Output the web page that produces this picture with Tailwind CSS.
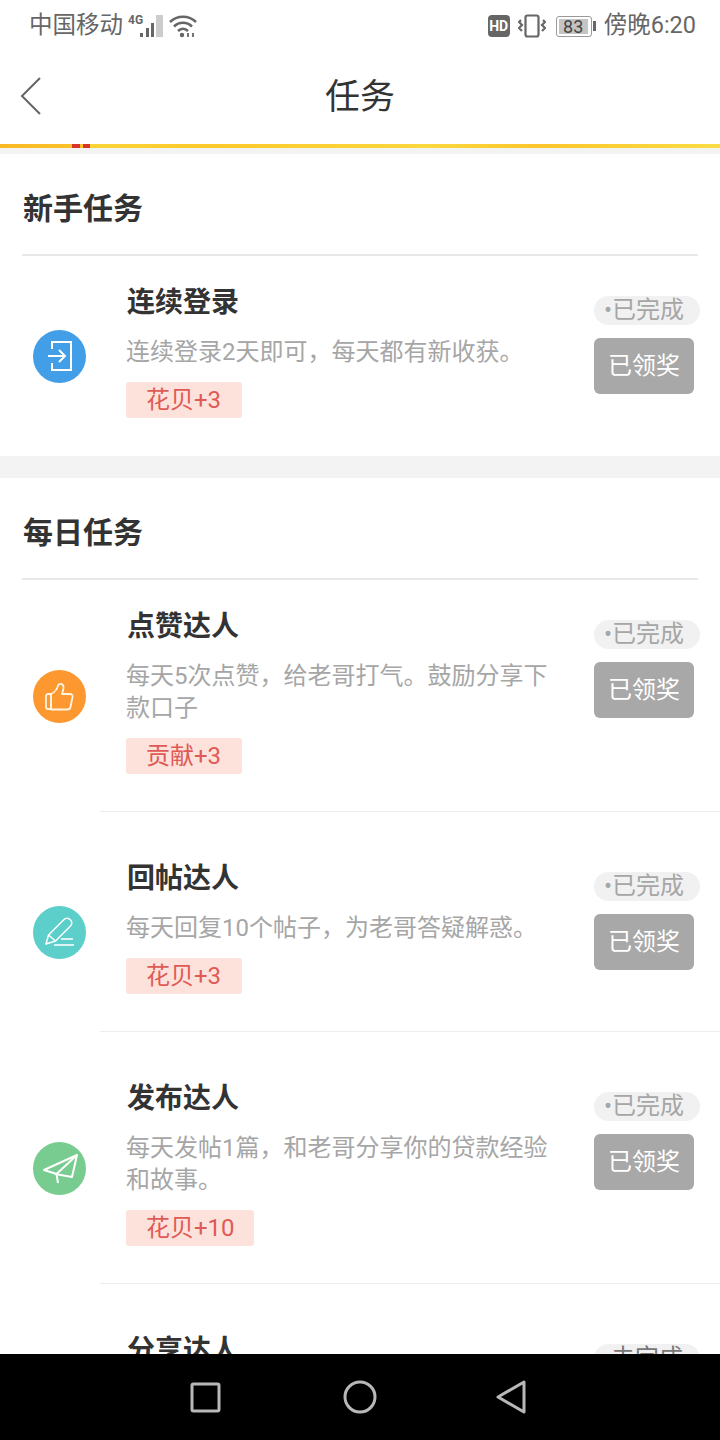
<!DOCTYPE html>
<html lang="zh-CN">
<head>
  <meta charset="UTF-8" />
  <meta name="viewport" content="width=device-width, initial-scale=1.0"/>
  <title>任务</title>
  <script src="https://cdn.jsdelivr.net/npm/@tailwindcss/browser@4"></script>
</head>
<body class="bg-white font-['Roboto','Noto_Sans_CJK_SC',sans-serif]">
<div class="w-[720px] h-[1440px] flex flex-col overflow-hidden">

  <!-- Status bar -->
  <div class="h-[50px] shrink-0 flex items-center justify-between pt-[2px] pl-[29px] pr-[24px] text-[#666] text-[23.5px]">
    <div class="flex items-center">
      <span>中国移动</span>
      <svg class="ml-[5px]" width="36" height="24" viewBox="0 0 36 24" fill="#666">
        <text x="0" y="10" font-size="12" font-weight="700" font-family="Roboto">4G</text>
        <rect x="12" y="19" width="3" height="4"/>
        <rect x="18" y="14" width="3" height="9"/>
        <rect x="23" y="9" width="3" height="14"/>
        <rect x="28" y="1" width="7" height="22" fill="#ccc"/>
      </svg>
      <svg class="ml-[5px]" width="28" height="24" viewBox="0 0 28 24" fill="none" stroke="#666" stroke-width="2.600">
        <path d="M1 8C8 1 20 1 27 8"/>
        <path d="M5 12.500C10 7.500 18 7.500 23 12.500"/>
        <path d="M9 17C12 14 16 14 19 17"/>
        <circle cx="13" cy="21" r="2.200" fill="#666" stroke="none"/>
        <path d="M19 19v4M24 19v4" stroke-width="1.800"/>
      </svg>
    </div>
    <div class="flex items-center">
      <div class="w-[22px] h-[22px] rounded-[4px] bg-[#666] text-white text-[14px] leading-[22px] font-bold text-center">HD</div>
      <svg class="ml-[8px]" width="28" height="24" viewBox="0 0 28 24" fill="none" stroke="#666" stroke-width="2.200">
        <rect x="7.500" y="1.500" width="13" height="21" rx="2"/>
        <path d="M3 6l-2 2 3 3-3 3 3 3M25 6l2 2-3 3 3 3-3 3"/>
      </svg>
      <div class="ml-[10px] w-[36px] h-[21px] rounded-[3px] border border-[#999] p-[2px] flex">
        <div class="w-[29px] bg-[#c4c4c4] text-[#444] text-[18px] leading-[15px] text-center">83</div>
      </div>
      <div class="w-[3px] h-[10px] bg-[#666] ml-[1px]"></div>
      <span class="ml-[8px]">傍晚6:20</span>
    </div>
  </div>

  <!-- Nav -->
  <div class="h-[94px] shrink-0 relative flex items-center justify-center">
    <svg class="absolute left-[20px] top-[27px]" width="22" height="38" viewBox="0 0 22 38" fill="none" stroke="#666" stroke-width="2">
      <path d="M20 1L2 19l18 18"/>
    </svg>
    <span class="text-[35px] text-[#333] pt-[3px]">任务</span>
  </div>

  <!-- Banner strip -->
  <div class="h-[4px] shrink-0 bg-[linear-gradient(90deg,#f9b925_0px,#fbc02a_72px,#d9342b_72px,#d9342b_80px,#fbc02a_80px,#fbc02a_83px,#d9342b_83px,#d9342b_90px,#fbd437_90px,#fcc92b_210px,#fbd73e_430px,#fcc62c_540px,#fbdc44_720px)]"></div>
  <div class="h-[6px] shrink-0 bg-[#f3f3f1]"></div>

  <!-- Content -->
  <div class="flex-1 min-h-0 overflow-hidden">

    <!-- New user tasks -->
    <div class="h-[102px] mx-[22px] border-b-2 border-[#e8e8e8] pt-[35px] pl-[1px] text-[30px] leading-[40px] font-bold text-[#333]">新手任务</div>

    <div class="pt-[30px] pb-[30px] flex items-center">
      <div class="w-[53px] h-[53px] rounded-full bg-[#439ee8] ml-[33px] mr-[40px] flex items-center justify-center">
        <svg width="24" height="30" viewBox="0 0 24 30" fill="none" stroke="#fff" stroke-width="2">
          <path d="M4 8V1h19v28H4v-7"/>
          <path d="M0 15h17M11 9l6 6-6 6"/>
        </svg>
      </div>
      <div class="w-[430px] pb-[8px]">
        <div class="pt-[1px] pl-[1px] text-[28px] leading-[32px] font-bold text-[#333]">连续登录</div>
        <div class="mt-[17px] text-[24px] leading-[32px] text-[#a6a6a6]">连续登录2天即可，每天都有新收获。</div>
        <div class="mt-[14px] inline-block align-top h-[36px] pl-[20px] pr-[21px] rounded-[3px] bg-[#fde2dc] text-[#df5a55] text-[24px] leading-[36px]">花贝+3</div>
      </div>
      <div class="self-start ml-[38px] mt-[10px]">
        <div class="w-[106px] h-[29px] rounded-full bg-[#f1f1f1] text-[#a6a6a6] text-[24px] leading-[29px] pl-[10px]">•已完成</div>
        <div class="w-[100px] h-[56px] mt-[13px] rounded-[6px] bg-[#a8a8a8] text-white text-[24px] leading-[56px] text-center">已领奖</div>
      </div>
    </div>

    <div class="h-[22px] bg-[#f3f3f3]"></div>

    <!-- Daily tasks -->
    <div class="h-[102px] mx-[22px] border-b-2 border-[#e8e8e8] pt-[35px] pl-[1px] text-[30px] leading-[40px] font-bold text-[#333]">每日任务</div>

    <div class="pt-[30px] pb-[29px] flex items-center">
      <div class="w-[53px] h-[53px] rounded-full bg-[#fd9831] ml-[33px] mr-[40px] flex items-center justify-center">
        <svg width="29" height="29" viewBox="0 0 29 29" fill="none" stroke="#fff3e0" stroke-width="1.800" stroke-linejoin="round">
          <path d="M6 12H3a2 2 0 0 0-2 2v11a2 2 0 0 0 2 2h3z"/>
          <path d="M6 12c3-1 6-5 7-8 .5-3 5.500-3 5.500 1.500 0 2-1 4.500-1.500 6.500h8c2 0 3 1.500 2.500 3l-2 10c-.3 1.500-1.500 2.500-3 2.500H6z"/>
        </svg>
      </div>
      <div class="w-[430px] pb-[8px]">
        <div class="pt-[1px] pl-[1px] text-[28px] leading-[32px] font-bold text-[#333]">点赞达人</div>
        <div class="mt-[17px] text-[24px] leading-[32px] text-[#a6a6a6]">每天5次点赞，给老哥打气。鼓励分享下款口子</div>
        <div class="mt-[14px] inline-block align-top h-[36px] pl-[20px] pr-[21px] rounded-[3px] bg-[#fde2dc] text-[#df5a55] text-[24px] leading-[36px]">贡献+3</div>
      </div>
      <div class="self-start ml-[38px] mt-[10px]">
        <div class="w-[106px] h-[29px] rounded-full bg-[#f1f1f1] text-[#a6a6a6] text-[24px] leading-[29px] pl-[10px]">•已完成</div>
        <div class="w-[100px] h-[56px] mt-[13px] rounded-[6px] bg-[#a8a8a8] text-white text-[24px] leading-[56px] text-center">已领奖</div>
      </div>
    </div>
    <div class="ml-[100px] h-[1px] bg-[#eeeeee]"></div>

    <div class="pt-[50px] pb-[29px] flex items-center">
      <div class="w-[53px] h-[53px] rounded-full bg-[#5ccfcb] ml-[33px] mr-[40px] flex items-center justify-center">
        <svg width="30" height="30" viewBox="0 0 30 30" fill="none" stroke="#fff" stroke-width="1.500" stroke-linejoin="round">
          <path d="M1 27L3.500 18 18.500 3c2-2 4.500-2 6.500-.5s2.500 4.500.5 6.500L10.500 24z"/>
          <path d="M3.500 18l7 6"/>
          <path d="M16 22h12M9 28h20"/>
        </svg>
      </div>
      <div class="w-[430px] pb-[8px]">
        <div class="pt-[1px] pl-[1px] text-[28px] leading-[32px] font-bold text-[#333]">回帖达人</div>
        <div class="mt-[17px] text-[24px] leading-[32px] text-[#a6a6a6]">每天回复10个帖子，为老哥答疑解惑。</div>
        <div class="mt-[14px] inline-block align-top h-[36px] pl-[20px] pr-[21px] rounded-[3px] bg-[#fde2dc] text-[#df5a55] text-[24px] leading-[36px]">花贝+3</div>
      </div>
      <div class="self-start ml-[38px] mt-[10px]">
        <div class="w-[106px] h-[29px] rounded-full bg-[#f1f1f1] text-[#a6a6a6] text-[24px] leading-[29px] pl-[10px]">•已完成</div>
        <div class="w-[100px] h-[56px] mt-[13px] rounded-[6px] bg-[#a8a8a8] text-white text-[24px] leading-[56px] text-center">已领奖</div>
      </div>
    </div>
    <div class="ml-[100px] h-[1px] bg-[#eeeeee]"></div>

    <div class="pt-[50px] pb-[29px] flex items-center">
      <div class="w-[53px] h-[53px] rounded-full bg-[#79cc8f] ml-[33px] mr-[40px] flex items-center justify-center">
        <svg width="36" height="32" viewBox="0 0 36 32" fill="none" stroke="#fff" stroke-width="2" stroke-linejoin="round">
          <path d="M35 3L2 18l12.500 4L35 3l-5 22-14-2.500"/>
          <path d="M14.500 22l1.500 9"/>
        </svg>
      </div>
      <div class="w-[430px] pb-[8px]">
        <div class="pt-[1px] pl-[1px] text-[28px] leading-[32px] font-bold text-[#333]">发布达人</div>
        <div class="mt-[17px] text-[24px] leading-[32px] text-[#a6a6a6]">每天发帖1篇，和老哥分享你的贷款经验和故事。</div>
        <div class="mt-[14px] inline-block align-top h-[36px] w-[128px] pl-[20px] rounded-[3px] bg-[#fde2dc] text-[#df5a55] text-[24px] leading-[36px]">花贝+10</div>
      </div>
      <div class="self-start ml-[38px] mt-[10px]">
        <div class="w-[106px] h-[29px] rounded-full bg-[#f1f1f1] text-[#a6a6a6] text-[24px] leading-[29px] pl-[10px]">•已完成</div>
        <div class="w-[100px] h-[56px] mt-[13px] rounded-[6px] bg-[#a8a8a8] text-white text-[24px] leading-[56px] text-center">已领奖</div>
      </div>
    </div>
    <div class="ml-[100px] h-[1px] bg-[#eeeeee]"></div>

    <div class="pt-[50px] flex items-start">
      <div class="w-[430px] ml-[126px] pt-[1px] pl-[1px] text-[28px] leading-[32px] font-bold text-[#333]">分享达人</div>
      <div class="ml-[38px] mt-[10px] w-[106px] h-[29px] rounded-full bg-[#f1f1f1] text-[#777] text-[24px] leading-[29px] text-center">未完成</div>
    </div>
  </div>

  <!-- Android nav bar -->
  <div class="h-[86px] shrink-0 bg-black">
    <svg width="720" height="86" viewBox="0 0 720 86" fill="none" stroke="#b8b8b8" stroke-width="3" stroke-linejoin="round">
      <rect x="192" y="30" width="27" height="27" rx="1.500"/>
      <circle cx="360" cy="43" r="15"/>
      <path d="M524 28v30L498 43z"/>
    </svg>
  </div>
</div>
</body>
</html>
